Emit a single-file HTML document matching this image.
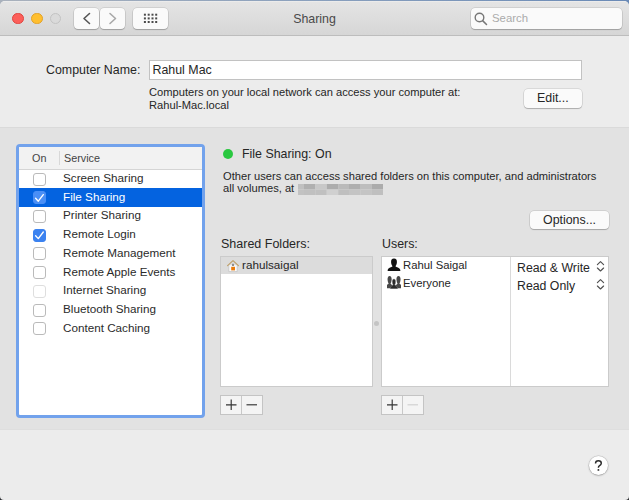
<!DOCTYPE html>
<html><head><meta charset="utf-8">
<style>
*{box-sizing:border-box;margin:0;padding:0}
html,body{width:629px;height:500px;overflow:hidden;background:#2b2d31}
body{font-family:"Liberation Sans",sans-serif;color:#262626;position:relative}
.a{position:absolute;white-space:nowrap}
#bluetop{position:absolute;left:0;top:0;width:629px;height:8px;background:linear-gradient(to right,#a9b1bc,#8aa0bd 50%,#6a8ab6)}
#win{position:absolute;left:0;top:1px;width:629px;height:499px;background:#ececec;border-radius:5px 5px 4px 4px;overflow:hidden}
#title{position:absolute;left:0;top:1px;width:629px;height:35px;border-radius:5px 5px 0 0;background:linear-gradient(#efefef 0,#e4e4e4 1.5px,#d6d6d6);border-bottom:1px solid #bdbdbd}
.tl{position:absolute;top:12.5px;width:11.6px;height:11.6px;border-radius:50%}
.btn{position:absolute;background:#fafafa;border-radius:4px;box-shadow:0 0 0 0.5px rgba(0,0,0,.16),0 1px 1px rgba(0,0,0,.2)}
#group{position:absolute;left:0;top:127px;width:629px;height:303px;background:#e2e2e2;border-top:1px solid #dadada;border-bottom:1px solid #dedede}
.t13{font-size:12.4px;line-height:15px}
.t11{font-size:11.15px;line-height:13px}
.box{position:absolute;background:#fff;border:1px solid #cbcbcb}
.cb{position:absolute;left:33px;width:13px;height:13px;border-radius:3px;background:#fff;border:1px solid #bababa}
.cbon{background:#3b82f0;border-color:#3b82f0}
.lbl{position:absolute;left:63px;font-size:11.7px;line-height:15px;color:#2b2b2b;white-space:nowrap}
.pm{position:absolute;height:20px;background:#f4f4f4;border:1px solid #c4c4c4}
</style></head><body>
<div id="bluetop"></div>
<div id="win"></div>
<div id="title"></div>
<div id="group"></div>

<!-- title bar -->
<div class="tl" style="left:12.1px;background:#fc5f5a;border:0.6px solid #e0443f"></div>
<div class="tl" style="left:31.2px;background:#ffbf2f;border:0.6px solid #e2a128"></div>
<div class="tl" style="left:49.6px;background:#dadada;border:0.8px solid #c3c3c3"></div>
<div class="btn" style="left:74px;top:8px;width:25px;height:21px"></div>
<div class="btn" style="left:100px;top:8px;width:25px;height:21px"></div>
<svg class="a" style="left:74px;top:8px" width="51" height="21" viewBox="0 0 51 21">
 <path d="M15.5 5.5 L10 10.5 L15.5 15.5" fill="none" stroke="#555" stroke-width="1.6" stroke-linecap="round" stroke-linejoin="round"/>
 <path d="M36 5.5 L41.5 10.5 L36 15.5" fill="none" stroke="#a8a8a8" stroke-width="1.6" stroke-linecap="round" stroke-linejoin="round"/>
</svg>
<div class="btn" style="left:133px;top:8px;width:35px;height:21px"></div>
<svg class="a" style="left:133px;top:8px" width="35" height="21" viewBox="0 0 35 21">
 <g fill="#4a4a4a"><rect x="10.9" y="5.7" width="2" height="2"/><rect x="14.7" y="5.7" width="2" height="2"/><rect x="18.5" y="5.7" width="2" height="2"/><rect x="22.2" y="5.7" width="2" height="2"/><rect x="10.9" y="9.4" width="2" height="2"/><rect x="14.7" y="9.4" width="2" height="2"/><rect x="18.5" y="9.4" width="2" height="2"/><rect x="22.2" y="9.4" width="2" height="2"/><rect x="10.9" y="13.0" width="2" height="2"/><rect x="14.7" y="13.0" width="2" height="2"/><rect x="18.5" y="13.0" width="2" height="2"/><rect x="22.2" y="13.0" width="2" height="2"/></g>
</svg>
<div class="a t13" style="left:0;width:629px;text-align:center;top:12px;color:#4a4a4a">Sharing</div>
<div class="btn" style="left:471px;top:8px;width:151px;height:21px"></div>
<svg class="a" style="left:474px;top:12px" width="14" height="14" viewBox="0 0 14 14">
 <circle cx="5.5" cy="5.5" r="4.3" fill="none" stroke="#777" stroke-width="1.4"/>
 <path d="M8.6 8.6 L12.5 12.5" stroke="#777" stroke-width="1.5" stroke-linecap="round"/>
</svg>
<div class="a" style="left:492px;top:11px;font-size:11.4px;line-height:15px;color:#ababab">Search</div>

<!-- computer name -->
<div class="a t13" style="left:46px;top:63px">Computer Name:</div>
<div class="box" style="left:149px;top:60px;width:433px;height:20px;border-color:#c2c2c2"></div>
<div class="a t13" style="left:152.5px;top:63px">Rahul Mac</div>
<div class="a t11" style="left:149px;top:86px">Computers on your local network can access your computer at:</div>
<div class="a t11" style="left:149px;top:99px">Rahul-Mac.local</div>
<div class="btn" style="left:524px;top:88.5px;width:57.5px;height:19px"></div>
<div class="a t13" style="left:537px;top:91px">Edit...</div>

<!-- service list -->
<div class="a" style="left:16px;top:144px;width:189px;height:274px;border:3px solid #72a2ec;border-radius:4px;background:#fff"></div>
<div class="a" style="left:19px;top:147px;width:183px;height:23px;background:#f2f2f2;border-bottom:1px solid #d5d5d5"></div>
<div class="a" style="left:59px;top:151px;width:1px;height:14px;background:#d8d8d8"></div>
<div class="a" style="left:32px;top:151px;font-size:10.8px;line-height:14px;color:#444">On</div>
<div class="a" style="left:64px;top:151px;font-size:10.8px;line-height:14px;color:#444">Service</div>

<div class="a" style="left:19px;top:188px;width:183px;height:18.5px;background:#0463e0"></div>

<div class="cb" style="top:172.5px"></div><div class="lbl" style="top:169.9px">Screen Sharing</div>
<div class="cb cbon" style="top:191.2px;background:#4a8ff6;border-color:#4a8ff6"></div><div class="lbl" style="top:188.6px;color:#fff">File Sharing</div>
<div class="cb" style="top:209.9px"></div><div class="lbl" style="top:207.3px">Printer Sharing</div>
<div class="cb cbon" style="top:228.7px"></div><div class="lbl" style="top:226.1px">Remote Login</div>
<div class="cb" style="top:247.4px"></div><div class="lbl" style="top:244.8px">Remote Management</div>
<div class="cb" style="top:266.1px"></div><div class="lbl" style="top:263.5px">Remote Apple Events</div>
<div class="cb" style="top:284.8px;border-color:#dedede"></div><div class="lbl" style="top:282.2px">Internet Sharing</div>
<div class="cb" style="top:303.5px"></div><div class="lbl" style="top:300.9px">Bluetooth Sharing</div>
<div class="cb" style="top:322.3px"></div><div class="lbl" style="top:319.7px">Content Caching</div>
<svg class="a" style="left:33px;top:191px" width="13" height="52" viewBox="0 0 13 52">
 <path d="M2.6 7.3 L5.3 10.2 L10.3 3.6" fill="none" stroke="#fff" stroke-width="1.35" stroke-linecap="round" stroke-linejoin="round"/>
 <path d="M2.6 44.7 L5.3 47.6 L10.3 41" fill="none" stroke="#fff" stroke-width="1.35" stroke-linecap="round" stroke-linejoin="round"/>
</svg>

<!-- right panel -->
<div class="a" style="left:223px;top:149px;width:10px;height:10px;border-radius:50%;background:#2ac840"></div>
<div class="a t13" style="left:242px;top:147px">File Sharing: On</div>
<div class="a t11" style="left:223px;top:169.5px">Other users can access shared folders on this computer, and administrators</div>
<div class="a t11" style="left:223px;top:182px">all volumes, at</div>
<svg class="a" style="left:297.5px;top:184px" width="85" height="11" viewBox="0 0 85 11">
 <rect x="0" y="0" width="6" height="5.5" fill="#c0c0c0"/><rect x="6" y="0" width="11.4" height="5.5" fill="#b0b0b0"/><rect x="17.3" y="0" width="11.5" height="5.5" fill="#c8c8c8"/><rect x="28.8" y="0" width="11.4" height="5.5" fill="#acacac"/><rect x="40.2" y="0" width="10.8" height="5.5" fill="#bababa"/><rect x="51" y="0" width="11.7" height="5.5" fill="#aeaeae"/><rect x="62.7" y="0" width="11.2" height="5.5" fill="#bdbdbd"/><rect x="73.9" y="0" width="11.1" height="5.5" fill="#acacac"/>
 <rect x="0" y="5.5" width="6" height="5.5" fill="#c2c2c2"/><rect x="6" y="5.5" width="11.4" height="5.5" fill="#c0c0c0"/><rect x="17.3" y="5.5" width="11.5" height="5.5" fill="#c0c0c0"/><rect x="28.8" y="5.5" width="11.4" height="5.5" fill="#d0d0d0"/><rect x="40.2" y="5.5" width="10.8" height="5.5" fill="#bfbfbf"/><rect x="51" y="5.5" width="11.7" height="5.5" fill="#c4c4c4"/><rect x="62.7" y="5.5" width="11.2" height="5.5" fill="#c4c4c4"/><rect x="73.9" y="5.5" width="11.1" height="5.5" fill="#bfbfbf"/>
</svg>
<div class="btn" style="left:530px;top:211px;width:79px;height:18px"></div>
<div class="a t13" style="left:543px;top:212.5px">Options...</div>

<div class="a" style="left:221px;top:237px;font-size:12.5px;line-height:15px">Shared Folders:</div>
<div class="a" style="left:382px;top:237px;font-size:12.4px;line-height:15px">Users:</div>

<div class="box" style="left:220px;top:256px;width:153px;height:131px"></div>
<div class="a" style="left:221px;top:257px;width:151px;height:17px;background:#dcdcdc"></div>
<svg class="a" style="left:226px;top:259px" width="14" height="14" viewBox="0 0 14 14">
 <path d="M2.8 6.2 V12.6 H11.2 V6.2" fill="#fafafa" stroke="#c4c4c4" stroke-width="0.8"/>
 <path d="M1.6 6.6 L7 1.6 L12.4 6.6" fill="none" stroke="#bfa06a" stroke-width="1.2" stroke-linecap="round" stroke-linejoin="round"/>
 <rect x="6" y="4.8" width="2" height="2.2" fill="#8f8f8f"/>
 <rect x="5.2" y="7.8" width="3.8" height="3.6" fill="#ec7c0c"/>
</svg>
<div class="a" style="left:242px;top:257px;font-size:11.7px;line-height:15px">rahulsaigal</div>
<div class="a" style="left:374px;top:321px;width:5px;height:5px;border-radius:50%;background:#c4c4c4"></div>

<div class="box" style="left:381px;top:256px;width:228px;height:131px"></div>
<div class="a" style="left:510px;top:257px;width:1px;height:129px;background:#dadada"></div>
<svg class="a" style="left:387px;top:258px" width="14" height="14" viewBox="0 0 14 14">
 <path d="M7 0.5 C4.8 0.5 3.9 2.2 4.1 4.4 C4.3 6.4 5.2 7.8 5.6 8.3 C4.8 9.2 1.2 9.8 0.8 11.8 L0.6 13 L13.4 13 L13.2 11.8 C12.8 9.8 9.2 9.2 8.4 8.3 C8.8 7.8 9.7 6.4 9.9 4.4 C10.1 2.2 9.2 0.5 7 0.5 Z" fill="#111"/>
</svg>
<div class="a" style="left:403px;top:258px;font-size:11.3px;line-height:15px">Rahul Saigal</div>
<svg class="a" style="left:387px;top:275px" width="14" height="14" viewBox="0 0 14 14">
 <g fill="#474747">
  <path transform="translate(-2.3,0.6) scale(0.7,0.97)" d="M7 0.5 C4.8 0.5 3.9 2.2 4.1 4.4 C4.3 6.4 5.2 7.8 5.6 8.3 C4.8 9.2 1.2 9.8 0.8 11.8 L0.6 13 L13.4 13 L13.2 11.8 C12.8 9.8 9.2 9.2 8.4 8.3 C8.8 7.8 9.7 6.4 9.9 4.4 C10.1 2.2 9.2 0.5 7 0.5 Z"/>
  <path transform="translate(6.6,0.6) scale(0.7,0.97)" d="M7 0.5 C4.8 0.5 3.9 2.2 4.1 4.4 C4.3 6.4 5.2 7.8 5.6 8.3 C4.8 9.2 1.2 9.8 0.8 11.8 L0.6 13 L13.4 13 L13.2 11.8 C12.8 9.8 9.2 9.2 8.4 8.3 C8.8 7.8 9.7 6.4 9.9 4.4 C10.1 2.2 9.2 0.5 7 0.5 Z"/>
 </g>
 <path transform="translate(2.9,3.6) scale(0.58,0.78)" d="M7 0.5 C4.8 0.5 3.9 2.2 4.1 4.4 C4.3 6.4 5.2 7.8 5.6 8.3 C4.8 9.2 1.2 9.8 0.8 11.8 L0.6 13 L13.4 13 L13.2 11.8 C12.8 9.8 9.2 9.2 8.4 8.3 C8.8 7.8 9.7 6.4 9.9 4.4 C10.1 2.2 9.2 0.5 7 0.5 Z" fill="#2a2a2a" stroke="#9a9a9a" stroke-width="0.6"/>
</svg>
<div class="a" style="left:403px;top:275.5px;font-size:11.3px;line-height:15px">Everyone</div>
<div class="a" style="left:517px;top:260.5px;font-size:12.3px;line-height:15px">Read &amp; Write</div>
<div class="a" style="left:517px;top:278.5px;font-size:12.3px;line-height:15px">Read Only</div>
<svg class="a" style="left:595px;top:260px" width="11" height="32" viewBox="0 0 11 32">
 <path d="M2.4 4.6 L5.5 1.6 L8.6 4.6 M2.4 8 L5.5 11 L8.6 8" fill="none" stroke="#505050" stroke-width="1.15" stroke-linecap="round" stroke-linejoin="round"/>
 <path d="M2.4 22.6 L5.5 19.6 L8.6 22.6 M2.4 26 L5.5 29 L8.6 26" fill="none" stroke="#505050" stroke-width="1.15" stroke-linecap="round" stroke-linejoin="round"/>
</svg>

<div class="pm" style="left:220px;top:395px;width:43px"></div>
<div class="a" style="left:241px;top:396px;width:1px;height:18px;background:#c8c8c8"></div>
<svg class="a" style="left:220px;top:395px" width="43" height="20" viewBox="0 0 43 20">
 <path d="M11.2 4.5 V15 M6 9.8 H16.5" stroke="#333" stroke-width="1.15"/>
 <path d="M26.5 9.8 H37" stroke="#333" stroke-width="1.15"/>
</svg>
<div class="pm" style="left:381px;top:395px;width:43px"></div>
<div class="a" style="left:402px;top:396px;width:1px;height:18px;background:#c8c8c8"></div>
<svg class="a" style="left:381px;top:395px" width="43" height="20" viewBox="0 0 43 20">
 <path d="M11.2 4.5 V15 M6 9.8 H16.5" stroke="#333" stroke-width="1.15"/>
 <path d="M26.5 9.8 H37" stroke="#cfcfcf" stroke-width="1.15"/>
</svg>

<!-- help -->
<div class="a" style="left:588.7px;top:456px;width:19px;height:19px;border-radius:50%;background:#fff;box-shadow:0 0 0 0.5px rgba(0,0,0,.14),0 0.5px 2px rgba(0,0,0,.3)"></div>
<svg class="a" style="left:588.7px;top:456px" width="19" height="19" viewBox="0 0 19 19">
 <path d="M6.5 7.4 C6.5 5.5 7.8 4.7 9.4 4.7 C11.1 4.7 12.3 5.7 12.3 7.2 C12.3 8.6 11.3 9.2 10.3 9.8 C9.6 10.2 9.4 10.8 9.4 11.8" fill="none" stroke="#2a2a2a" stroke-width="1.45"/>
 <circle cx="9.4" cy="13.9" r="0.95" fill="#2a2a2a"/>
</svg>
</body></html>
